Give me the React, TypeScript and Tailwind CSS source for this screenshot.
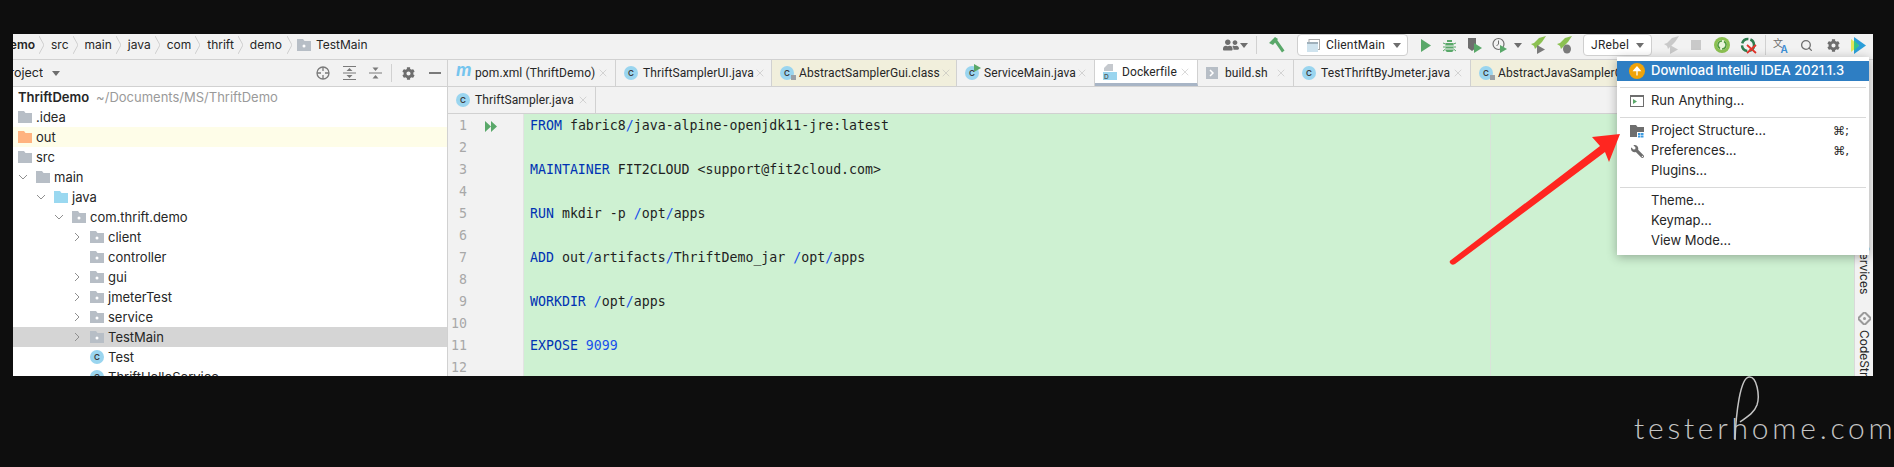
import { X, Search } from "lucide-react"
import { FaCog, FaUserFriends, FaWrench } from "react-icons/fa"

const GREEN = "#59a869"
const GRAY = "#6e6e6e"

function Caret({ className = "" }: { className?: string }) {
  return (
    <svg width="8" height="5" viewBox="0 0 8 5" className={`shrink-0 ${className}`}>
      <path d="M0 0h8L4 5z" fill="#6e6e6e" />
    </svg>
  )
}

function Folder({ color = "#b7bec6", pkg = false, className = "" }: { color?: string; pkg?: boolean; className?: string }) {
  return (
    <svg width="14" height="12" viewBox="0 0 14 12" className={`shrink-0 ${className}`}>
      <path d="M0 0h6l1.5 2H14v10H0z" fill={color} />
      {pkg && <circle cx="7" cy="7" r="1.5" fill="#fff" />}
    </svg>
  )
}

function Chevron({ open = false }: { open?: boolean }) {
  return (
    <svg width="10" height="10" viewBox="0 0 10 10" className="shrink-0">
      <path d={open ? "M1 3l4 4 4-4" : "M3 1l4 4-4 4"} fill="none" stroke="#8f8f8f" strokeWidth="1" />
    </svg>
  )
}

function ClassIcon({ kind = "plain" }: { kind?: "plain" | "abstract" | "run" }) {
  return (
    <span className="relative flex h-[14px] w-[14px] shrink-0 items-center justify-center rounded-full bg-[#9ad5ef] font-['Inter',sans-serif] text-[8px] font-semibold leading-none text-[#3a3a3a]">
      C
      {kind === "abstract" && <span className="absolute -right-[2px] bottom-0 h-[5px] w-[5px] bg-[#9aa0a6]" />}
      {kind === "run" && (
        <svg width="8" height="8" viewBox="0 0 8 8" className="absolute -right-[2px] -top-[2px]">
          <path d="M1 0l7 4-7 4z" fill={GREEN} />
        </svg>
      )}
    </span>
  )
}

function FileIcon({ type }: { type: string }) {
  if (type === "maven") {
    return <span className="-mt-[5px] w-[15px] font-['Inter',sans-serif] text-[17px] font-bold italic leading-none text-[#76c5ee]">m</span>
  }
  if (type === "docker") {
    return (
      <svg width="14" height="16" viewBox="0 0 14 16" className="shrink-0">
        <path d="M5 0h5v7H1V4z" fill="#c5c9ce" />
        <rect x="0" y="8" width="14" height="8" fill="#9ad5ef" />
        <text x="1" y="15" fontSize="6.5" fill="#333" fontFamily="Inter, sans-serif">D</text>
      </svg>
    )
  }
  if (type === "shell") {
    return (
      <svg width="12" height="12" viewBox="0 0 12 12" className="shrink-0">
        <rect width="12" height="12" fill="#b7bec6" />
        <path d="M4 3l3 3-3 3" fill="none" stroke="#fff" strokeWidth="1.5" />
      </svg>
    )
  }
  return <ClassIcon kind={type as "plain" | "abstract" | "run"} />
}

const TABS = [
  { name: "pom.xml (ThriftDemo)", icon: "maven", cls: "w-[168px] bg-[#f2f2f2]" },
  { name: "ThriftSamplerUI.java", icon: "plain", cls: "w-[156px] bg-[#f2f2f2]" },
  { name: "AbstractSamplerGui.class", icon: "abstract", cls: "w-[185px] bg-[#f1efdc]" },
  { name: "ServiceMain.java", icon: "run", cls: "w-[138px] bg-[#f2f2f2]" },
  { name: "Dockerfile", icon: "docker", cls: "w-[103px] bg-white border-b-[3px] border-b-[#a8b5c6]" },
  { name: "build.sh", icon: "shell", cls: "w-[96px] bg-[#f2f2f2]" },
  { name: "TestThriftByJmeter.java", icon: "plain", cls: "w-[177px] bg-[#f2f2f2]" },
  { name: "AbstractJavaSamplerClient.class", icon: "abstract", cls: "w-[220px] bg-[#f1efdc]" },
]

function Tab({ name, icon, cls }: { name: string; icon: string; cls: string }) {
  return (
    <div className={`flex h-full shrink-0 items-center border-r border-r-[#d1d1d1] pl-[8px] pr-[6px] ${cls}`}>
      <span className="flex w-[19px] shrink-0 items-center">
        <FileIcon type={icon} />
      </span>
      <span className="whitespace-nowrap font-['Roboto',sans-serif] text-[12px] tracking-[0.1px] text-[#262626]">{name}</span>
      <X size={12} strokeWidth={1} className="ml-auto shrink-0 text-[#b5b5b5]" />
    </div>
  )
}

const TREE = [
  { name: ".idea", indent: "pl-[5px]", icon: "#b7bec6" },
  { name: "out", indent: "pl-[5px]", icon: "#ffb380", bg: "bg-[#fefde8]" },
  { name: "src", indent: "pl-[5px]", icon: "#b7bec6" },
  { name: "main", indent: "pl-[5px]", icon: "#b7bec6", arrow: "open" },
  { name: "java", indent: "pl-[23px]", icon: "#9ad8f0", arrow: "open" },
  { name: "com.thrift.demo", indent: "pl-[41px]", icon: "#b7bec6", arrow: "open", pkg: true },
  { name: "client", indent: "pl-[59px]", icon: "#b7bec6", arrow: "closed", pkg: true },
  { name: "controller", indent: "pl-[77px]", icon: "#b7bec6", pkg: true },
  { name: "gui", indent: "pl-[59px]", icon: "#b7bec6", arrow: "closed", pkg: true },
  { name: "jmeterTest", indent: "pl-[59px]", icon: "#b7bec6", arrow: "closed", pkg: true },
  { name: "service", indent: "pl-[59px]", icon: "#b7bec6", arrow: "closed", pkg: true },
  { name: "TestMain", indent: "pl-[59px]", icon: "#b7bec6", arrow: "closed", pkg: true, bg: "bg-[#d5d5d5]" },
  { name: "Test", indent: "pl-[77px]", cls: true },
  { name: "ThriftHelloService", indent: "pl-[77px]", cls: true },
]

const KW = "text-[#0033b3]"
const SL = "text-[#1750eb]"

const CODE: (React.ReactNode | null)[] = [
  <><span className={KW}>FROM</span> fabric8<span className={SL}>/</span>java-alpine-openjdk11-jre:latest</>,
  null,
  <><span className={KW}>MAINTAINER</span> FIT2CLOUD &lt;support@fit2cloud.com&gt;</>,
  null,
  <><span className={KW}>RUN</span> mkdir -p <span className={SL}>/</span>opt<span className={SL}>/</span>apps</>,
  null,
  <><span className={KW}>ADD</span> out<span className={SL}>/</span>artifacts<span className={SL}>/</span>ThriftDemo_jar <span className={SL}>/</span>opt<span className={SL}>/</span>apps</>,
  null,
  <><span className={KW}>WORKDIR</span> <span className={SL}>/</span>opt<span className={SL}>/</span>apps</>,
  null,
  <><span className={KW}>EXPOSE</span> <span className={SL}>9099</span></>,
  null,
]

function Rocket({ color = "#8cc152", second = "#7a7a7a", bug = false, className = "" }: { color?: string; second?: string; bug?: boolean; className?: string }) {
  return (
    <svg width="15" height="18" viewBox="0 0 15 18" className={`shrink-0 ${className}`}>
      <path d="M15 0L8 2 3 7 0 8l3 2 1 3 2-2 5-5z" fill={color} />
      {bug ? <ellipse cx="10" cy="13" rx="4" ry="4.5" fill={second} /> : <path d="M6 9l8 4.5L6 18z" fill={second} />}
    </svg>
  )
}

function Separator() {
  return <div className="mx-[3px] mb-[3px] mt-[6px] h-px bg-[#d9d9d9]" />
}

export default function App() {
  return (
    <div className="relative h-[467px] w-[1894px] overflow-hidden bg-[#0e0e0e] pl-[13px] pt-[34px] font-['Inter',sans-serif]">
      <div className="relative flex h-[342px] w-[1860px] flex-col overflow-hidden bg-[#f2f2f2]">
        {/* toolbar */}
        <div className="flex h-[26px] shrink-0 items-center border-b border-b-[#d1d1d1] pb-[3px] text-[12px] text-[#262626]">
          <span className="flex w-[22px] justify-end overflow-hidden whitespace-nowrap font-semibold">ThriftDemo</span>
          {["src", "main", "java", "com", "thrift", "demo"].map((s) => (
            <span key={s} className="flex items-center">
              <svg width="5" height="18" viewBox="0 0 5 18" className="ml-[4px] mr-[7px]">
                <path d="M0 0l5 9-5 9" fill="none" stroke="#cfcfcf" strokeWidth="1" />
              </svg>
              {s}
            </span>
          ))}
          <svg width="5" height="18" viewBox="0 0 5 18" className="ml-[5px] mr-[5px]">
            <path d="M0 0l5 9-5 9" fill="none" stroke="#cfcfcf" strokeWidth="1" />
          </svg>
          <Folder pkg className="mr-[5px]" />
          TestMain

          <div className="ml-auto flex items-center pr-[7px] font-['Roboto',sans-serif]">
            <FaUserFriends size={16} color={GRAY} className="shrink-0" />
            <Caret className="ml-[1px]" />
            <span className="ml-[8px] h-[18px] w-px bg-[#d1d1d1]" />
            <svg width="16" height="16" viewBox="0 0 16 16" className="ml-[12px] shrink-0">
              <path d="M0 6l6-6 3 2-5 6zM5 4l2.5-2 8 11.5-2.5 2z" fill={GREEN} />
            </svg>
            <div className="ml-[12px] flex h-[22px] w-[111px] items-center rounded-[4px] border border-[#cfcfcf] bg-white pl-[9px]">
              <svg width="13" height="13" viewBox="0 0 13 13" className="shrink-0">
                <rect x="2" y="0.5" width="10.5" height="10" fill="#fff" stroke="#a9a9a9" />
                <rect x="0" y="3" width="11" height="10" fill="#cfe3ee" />
                <rect x="0" y="3" width="11" height="2" fill="#9fb0bb" />
              </svg>
              <span className="ml-[6px] tracking-[0.2px]">ClientMain</span>
              <Caret className="ml-[8px]" />
            </div>
            <svg width="10" height="13" viewBox="0 0 10 13" className="ml-[13px] shrink-0">
              <path d="M0 0l10 6.5L0 13z" fill={GREEN} />
            </svg>
            <svg width="13" height="14" viewBox="0 0 13 14" className="ml-[12px] shrink-0">
              <path d="M4 2h5v2H4zM2.5 5h8v7.5a2 2 0 0 1-2 1.5h-4a2 2 0 0 1-2-1.5z" fill={GREEN} />
              <path d="M0 5l2.5 1M13 5l-2.500 1M0 9h2.500M13 9h-2.500M0 13l2.500-2M13 13l-2.500-2" stroke={GREEN} />
              <path d="M2.500 8h8M2.500 11h8" stroke="#f2f2f2" />
            </svg>
            <svg width="14" height="16" viewBox="0 0 14 16" className="ml-[12px] shrink-0">
              <path d="M0 1h8v10l-4 3-4-3z" fill={GRAY} />
              <path d="M6 6l8 5-8 5z" fill={GREEN} />
            </svg>
            <svg width="15" height="16" viewBox="0 0 15 16" className="ml-[10px] shrink-0">
              <circle cx="6.500" cy="7" r="5.500" fill="none" stroke={GRAY} strokeWidth="1.200" />
              <path d="M6.500 3.500V7L4.500 9" fill="none" stroke={GRAY} />
              <path d="M8 8l7 4-7 4z" fill={GREEN} />
            </svg>
            <Caret className="ml-[7px]" />
            <Rocket className="ml-[9px]" />
            <Rocket bug className="ml-[11px]" />
            <div className="ml-[11px] flex h-[22px] w-[69px] items-center rounded-[4px] border border-[#cfcfcf] bg-white pl-[7px]">
              <span className="tracking-[0.3px]">JRebel</span>
              <Caret className="ml-[7px]" />
            </div>
            <Rocket color="#c9c9c9" second="#c9c9c9" className="ml-[12px]" />
            <span className="ml-[12px] h-[10px] w-[10px] bg-[#c9c9c9]" />
            <svg width="16" height="16" viewBox="0 0 16 16" className="ml-[13px] shrink-0">
              <circle cx="8" cy="8" r="8" fill="#8cc152" />
              <circle cx="8" cy="8" r="5" fill="#e8f3da" />
              <path d="M8 4a4 4 0 0 0-2 7.500M8 12a4 4 0 0 0 2-7.500" fill="none" stroke="#4f9a3d" strokeWidth="1.500" />
            </svg>
            <svg width="17" height="17" viewBox="0 0 17 17" className="ml-[10px] shrink-0">
              <circle cx="8" cy="8" r="6" fill="none" stroke="#2f7d4f" strokeWidth="2.500" strokeDasharray="8 2" />
              <path d="M7 8l9 8M16 8l-9 8" stroke="#e5342b" strokeWidth="1.800" />
            </svg>
            <span className="ml-[8px] h-[20px] w-px bg-[#d1d1d1]" />
            <svg width="16" height="16" viewBox="0 0 16 16" className="ml-[7px] shrink-0">
              <text x="0" y="10" fontSize="10" fill="#6e6e6e" fontFamily="'Noto Sans CJK SC', sans-serif">文</text>
              <text x="7.500" y="16" fontSize="10" fontWeight="600" fill="#3d8fd6" fontFamily="Inter, sans-serif">A</text>
            </svg>
            <Search size={13} strokeWidth={2.4} color={GRAY} className="ml-[11px] shrink-0" />
            <FaCog size={13} color={GRAY} className="ml-[14px] shrink-0" />
            <svg width="15" height="17" viewBox="0 0 15 17" className="ml-[11px] shrink-0">
              <path d="M3 0l12 8.500L3 17z" fill="#2b9ed9" />
              <path d="M0 2l8 6.500L0 15z" fill="#e4e85a" />
              <path d="M3 3l5 5.500L3 14z" fill="#35c48a" />
            </svg>
          </div>
        </div>

        <div className="flex min-h-0 flex-1">
          {/* project panel */}
          <div className="flex w-[435px] shrink-0 flex-col border-r border-r-[#d1d1d1]">
            <div className="flex h-[27px] shrink-0 items-center border-b border-b-[#d1d1d1] text-[12.5px] text-[#262626]">
              <span className="flex w-[30px] justify-end overflow-hidden whitespace-nowrap">Project</span>
              <Caret className="ml-[9px]" />
              <svg width="14" height="14" viewBox="0 0 14 14" className="ml-[256px] shrink-0">
                <circle cx="7" cy="7" r="6" fill="none" stroke="#7a7a7a" strokeWidth="1.300" />
                <path d="M7 1v4M7 9v4M1 7h4M9 7h4" stroke="#7a7a7a" strokeWidth="1.300" />
              </svg>
              <svg width="13" height="14" viewBox="0 0 13 14" className="ml-[13px] shrink-0">
                <path d="M0 0.500h13M0 13.500h13M0 7h13" stroke="#7a7a7a" />
                <path d="M6.500 2l3 3h-6zM6.500 12l3-3h-6z" fill="#7a7a7a" />
              </svg>
              <svg width="13" height="14" viewBox="0 0 13 14" className="ml-[13px] shrink-0">
                <path d="M0 7h13" stroke="#7a7a7a" />
                <path d="M6.500 5l3-3.500h-6zM6.500 9l3 3.500h-6z" fill="#7a7a7a" />
              </svg>
              <span className="ml-[9px] h-[18px] w-px bg-[#d1d1d1]" />
              <FaCog size={13} color={GRAY} className="ml-[10px] shrink-0" />
              <span className="ml-[14px] h-[2px] w-[12px] bg-[#7a7a7a]" />
            </div>
            <div className="min-h-0 flex-1 overflow-hidden bg-white text-[13px] text-[#262626]">
              <div className="flex h-[20px] items-center pl-[5px]">
                <span className="mt-[2px] font-semibold">ThriftDemo</span>
                <span className="ml-[7px] mt-[2px] text-[#9a9a9a]">~/Documents/MS/ThriftDemo</span>
              </div>
              {TREE.map((r) => (
                <div key={r.name} className={`flex h-[20px] items-center ${r.indent} ${r.bg ?? ""}`}>
                  {r.arrow ? (
                    <span className="mr-[8px] flex w-[10px] shrink-0">
                      <Chevron open={r.arrow === "open"} />
                    </span>
                  ) : null}
                  {r.cls ? <ClassIcon /> : <Folder color={r.icon} pkg={r.pkg} />}
                  <span className="ml-[4px] mt-[2px]">{r.name}</span>
                </div>
              ))}
            </div>
          </div>

          {/* editor */}
          <div className="flex min-w-0 flex-1 flex-col">
            <div className="flex h-[27px] shrink-0 overflow-hidden border-b border-b-[#d1d1d1]">
              {TABS.map((t) => (
                <Tab key={t.name} {...t} />
              ))}
            </div>
            <div className="flex h-[27px] shrink-0 border-b border-b-[#d1d1d1]">
              <Tab name="ThriftSampler.java" icon="plain" cls="w-[148px] bg-[#f2f2f2]" />
            </div>
            <div className="flex min-h-0 flex-1 font-['DejaVu_Sans_Mono',monospace] text-[13.25px]">
              <div className="w-[76px] shrink-0 border-r border-r-[#e3e3e3] bg-[#f2f2f2] text-[#a8a8a8]">
                {CODE.map((_, i) => (
                  <div key={i} className="flex h-[22px] items-center pt-[2px]">
                    <span className="w-[19px] text-right">{i + 1}</span>
                    {i === 0 && (
                      <svg width="12" height="11" viewBox="0 0 12 11" className="ml-[18px]">
                        <path d="M0 0l6 5.500L0 11zM6 0l6 5.500L6 11z" fill={GREEN} />
                      </svg>
                    )}
                  </div>
                ))}
              </div>
              <div className="w-[967px] shrink-0 border-r border-r-[#d9e3d9] bg-[#cef1d2] pl-[6px] text-[#1f1f1f]">
                {CODE.map((line, i) => (
                  <div key={i} className="flex h-[22px] items-center whitespace-pre pt-[2px]">
                    <span>{line}</span>
                  </div>
                ))}
              </div>
              <div className="flex-1 bg-[#cef1d2]" />
            </div>
          </div>

          {/* right tool strip */}
          <div className="flex w-[19px] shrink-0 flex-col items-center border-l border-l-[#d9d9d9] bg-[#f2f2f2] pt-[185px] text-[12px] text-[#262626]">
            <span className="whitespace-nowrap [writing-mode:vertical-rl]">Services</span>
            <svg width="13" height="13" viewBox="0 0 13 13" className="mt-[18px] shrink-0">
              <path d="M6.500 0l6.500 6.500-6.500 6.500L0 6.500z" fill="none" stroke="#9a9a9a" strokeWidth="2" />
              <circle cx="6.500" cy="6.500" r="1.500" fill="#9a9a9a" />
            </svg>
            <span className="mt-[5px] whitespace-nowrap [writing-mode:vertical-rl]">CodeStream</span>
          </div>
        </div>

        {/* actions menu */}
        <div className="absolute left-[1604px] top-[23px] w-[252px] bg-white py-[4px] text-[13px] text-[#262626] shadow-[0_2px_10px_rgba(0,0,0,0.3)]">
          <div className="flex h-[20px] items-center bg-[#2e7ec3] font-medium text-white">
            <span className="flex w-[34px] justify-center pl-[6px]">
              <svg width="16" height="16" viewBox="0 0 16 16">
                <circle cx="8" cy="8" r="8" fill="#f0a30a" />
                <path d="M8 12.500V5M5 7.500L8 4l3 3.500z" fill="#fff" stroke="#fff" strokeWidth="1.300" />
              </svg>
            </span>
            Download IntelliJ IDEA 2021.1.3
          </div>
          <Separator />
          <div className="flex h-[20px] items-center">
            <span className="flex w-[34px] justify-center pl-[6px]">
              <svg width="14" height="12" viewBox="0 0 14 12">
                <rect x="0.500" y="0.500" width="13" height="11" fill="#fff" stroke="#6e6e6e" />
                <rect x="0" y="0" width="14" height="2" fill="#6e6e6e" />
                <path d="M3 4l4 2.500L3 9z" fill={GREEN} />
              </svg>
            </span>
            Run Anything...
          </div>
          <Separator />
          <div className="flex h-[20px] items-center pr-[20px]">
            <span className="flex w-[34px] justify-center pl-[6px]">
              <svg width="14" height="13" viewBox="0 0 14 13">
                <path d="M0 0h6l1.500 2H14v5H7v5H0z" fill="#6e6e6e" />
                <path d="M8 8h2.500v2H8zM11 8h2.500v2H11zM8 10.500h2.500v2H8zM11 10.500h2.500v2H11z" fill="#3d9ae0" />
              </svg>
            </span>
            Project Structure...
            <span className="ml-auto font-['DejaVu_Sans',sans-serif] text-[12px]">⌘;</span>
          </div>
          <div className="flex h-[20px] items-center pr-[20px]">
            <span className="flex w-[34px] justify-center pl-[6px]">
              <FaWrench size={13} color={GRAY} className="-scale-x-100" />
            </span>
            Preferences...
            <span className="ml-auto font-['DejaVu_Sans',sans-serif] text-[12px]">⌘,</span>
          </div>
          <div className="flex h-[20px] items-center pl-[34px]">Plugins...</div>
          <Separator />
          <div className="flex h-[20px] items-center pl-[34px]">Theme...</div>
          <div className="flex h-[20px] items-center pl-[34px]">Keymap...</div>
          <div className="flex h-[20px] items-center pl-[34px]">View Mode...</div>
        </div>
      </div>

      {/* red annotation arrow */}
      <svg className="absolute left-0 top-0" width="1894" height="467" viewBox="0 0 1894 467" fill="none">
        <path
          d="M1451 260L1600 146L1592 137L1620 134L1609 162L1605 152L1455 264Q1452 266 1450 263Q1449 261 1451 260Z"
          fill="#ff2620"
        />
      </svg>

      {/* watermark */}
      <span className="absolute left-[1634px] top-[403px] font-['Lato',sans-serif] text-[30px] font-light leading-[48px] tracking-[3.75px] text-[#c4c4c4]">
        testerhome.com
      </span>
      <svg className="absolute left-[1730px] top-[374px]" width="34" height="70" viewBox="0 0 34 70" fill="none">
        <path d="M5 66C6 40 10 4 19 3C27 2 30 22 27 31C24 39 17 43 10 48" stroke="#c4c4c4" strokeWidth="1.500" />
      </svg>
    </div>
  )
}
